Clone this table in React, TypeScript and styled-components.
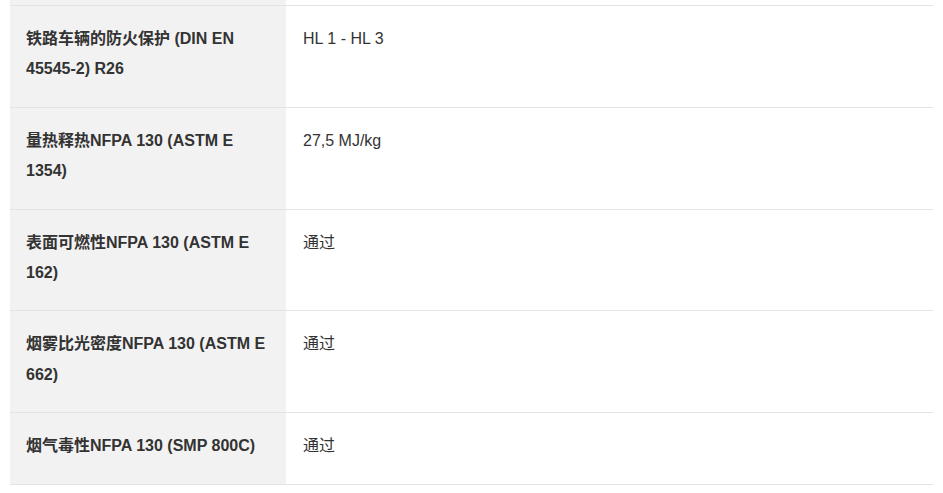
import React from "react";
import styled, { createGlobalStyle } from "styled-components";

const Global = createGlobalStyle`
  html, body { margin: 0; padding: 0; background: #ffffff; }
  body {
    font-family: "Liberation Sans", "Noto Sans CJK SC", sans-serif;
    color: #333333;
  }
`;

const Page = styled.div`
  padding: 0 10px;
`;

const Table = styled.table`
  width: 100%;
  border-collapse: collapse;
  table-layout: fixed;
`;

const Row = styled.tr`
  border-bottom: 1px solid #e2e2e8;
`;

const StubCell = styled.td<{ $label?: boolean }>`
  height: 5px;
  padding: 0;
  background: ${(p) => (p.$label ? "#f2f2f2" : "#ffffff")};
`;

const LabelCell = styled.th`
  width: 276px;
  background: #f2f2f2;
  padding: 18px 16px 22px 16px;
  text-align: left;
  vertical-align: top;
  font-weight: 700;
  font-size: 16px;
  line-height: 1.9;
  color: #333333;
`;

const ValueCell = styled.td`
  padding: 18px 16px 22px 17px;
  vertical-align: top;
  font-weight: 400;
  font-size: 16px;
  line-height: 1.9;
  color: #333333;
`;

const rows: [string, string][] = [
  ["铁路车辆的防火保护 (DIN EN 45545-2) R26", "HL 1 - HL 3"],
  ["量热释热NFPA 130 (ASTM E 1354)", "27,5 MJ/kg"],
  ["表面可燃性NFPA 130 (ASTM E 162)", "通过"],
  ["烟雾比光密度NFPA 130 (ASTM E 662)", "通过"],
  ["烟气毒性NFPA 130 (SMP 800C)", "通过"],
];

export default function App() {
  return (
    <Page>
      <Global />
      <Table>
        <tbody>
          <Row>
            <StubCell $label style={{ width: 276 }} />
            <StubCell />
          </Row>
          {rows.map(([label, value]) => (
            <Row key={label}>
              <LabelCell>{label}</LabelCell>
              <ValueCell>{value}</ValueCell>
            </Row>
          ))}
        </tbody>
      </Table>
    </Page>
  );
}
